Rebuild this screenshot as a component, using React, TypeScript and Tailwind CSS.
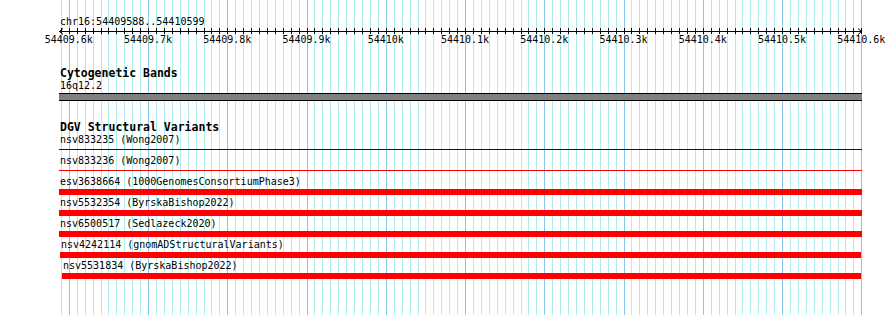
import React from 'react';

// view: chr16:54409588..54410599, 0.7925 px per bp, track area starts at x=59
const VIEW_START = 54409587;
const PX_PER_BP = 0.7925;
const LEFT = 59;
const toX = (bp: number) => LEFT + (bp - VIEW_START) * PX_PER_BP;

const gridBps: number[] = [];
for (let bp = 54409590; bp <= 54410600; bp += 10) gridBps.push(bp);

const majorBps: number[] = [];
for (let bp = 54409600; bp <= 54410600; bp += 100) majorBps.push(bp);

const formatK = (bp: number) => `${+(bp / 1000).toFixed(1)}k`;

type Variant = {
  label: string;
  kind: 'line' | 'bar';
  color: string;
  offset: string;
  width: string;
};

const variants: Variant[] = [
  { label: 'nsv833235 (Wong2007)', kind: 'line', color: 'bg-[#0000cc]', offset: 'ml-0', width: 'w-[803px]' },
  { label: 'nsv833236 (Wong2007)', kind: 'line', color: 'bg-[#ff0000]', offset: 'ml-0', width: 'w-[803px]' },
  { label: 'esv3638664 (1000GenomesConsortiumPhase3)', kind: 'bar', color: 'bg-[#ff0000]', offset: 'ml-0', width: 'w-[803px]' },
  { label: 'nsv5532354 (ByrskaBishop2022)', kind: 'bar', color: 'bg-[#ff0000]', offset: 'ml-0', width: 'w-[803px]' },
  { label: 'nsv6500517 (Sedlazeck2020)', kind: 'bar', color: 'bg-[#ff0000]', offset: 'ml-0', width: 'w-[803px]' },
  { label: 'nsv4242114 (gnomADStructuralVariants)', kind: 'bar', color: 'bg-[#ff0000]', offset: 'ml-px', width: 'w-[801px]' },
  { label: 'nsv5531834 (ByrskaBishop2022)', kind: 'bar', color: 'bg-[#ff0000]', offset: 'ml-[3px]', width: 'w-[799px]' },
];

const GridLines = () => (
  <svg className="absolute left-0 top-0" width={890} height={315}>
    {gridBps.map((bp) => {
      const x = Math.floor(toX(bp)) + 0.5;
      const major = (bp % 100) === 0;
      return (
        <line
          key={bp}
          x1={x}
          x2={x}
          y1={0}
          y2={315}
          stroke={major ? '#87c8ea' : '#afeeee'}
          strokeWidth={1}
        />
      );
    })}
  </svg>
);

const Ruler = () => (
  <div className="relative h-[18px] w-[803px]">
    <svg className="absolute left-0 top-0" width={805} height={18}>
      <line x1={0} x2={803} y1={3.5} y2={3.5} stroke="#000" strokeWidth={1} />
      <polyline points="4,0.5 0.5,3.5 4,6.5" fill="none" stroke="#000" strokeWidth={1} />
      <polyline points="799,0.5 802.5,3.5 799,6.5" fill="none" stroke="#000" strokeWidth={1} />
      {gridBps.map((bp) => {
        const x = Math.floor(toX(bp)) - LEFT + 0.5;
        return <line key={bp} x1={x} x2={x} y1={0} y2={6} stroke="#000" strokeWidth={1} />;
      })}
    </svg>
    {majorBps.map((bp) => (
      <div
        key={bp}
        className="absolute top-[6px] h-[12px] -translate-x-1/2 whitespace-nowrap text-[10px] leading-[12px]"
        style={{ left: toX(bp) - LEFT - 0.5 }}
      >
        {formatK(bp)}
      </div>
    ))}
  </div>
);

const VariantRow = ({ v }: { v: Variant }) => (
  <div className="flex h-[21px] flex-col">
    <div className={`h-[12px] whitespace-nowrap pl-px text-[10px] leading-[12px] ${v.offset}`}>{v.label}</div>
    <div className={`mt-px h-[6px] ${v.offset} ${v.width}`}>
      {v.kind === 'bar' ? (
        <div className={`h-[6px] ${v.color}`} />
      ) : (
        <div className={`mt-[2px] h-px ${v.color}`} />
      )}
    </div>
  </div>
);

export default function App() {
  return (
    <div className="relative h-[315px] w-[890px] overflow-hidden bg-white font-['DejaVu_Sans_Mono',monospace] text-black">
      <GridLines />
      <div className="relative flex flex-col pl-[59px] pt-[16px]">
        <div className="h-[12px] pl-px text-[10px] leading-[12px]">chr16:54409588..54410599</div>
        <Ruler />

        <div className="mt-[21px] h-[13px] pl-px text-[11.5px] font-bold leading-[13px]">Cytogenetic Bands</div>
        <div className="h-[12px] pl-px text-[10px] leading-[12px]">16q12.2</div>
        <div className="mt-px h-[8px] w-[803px] border-y border-black bg-[#808080]" />

        <div className="mt-[20px] h-[13px] pl-px text-[11.5px] font-bold leading-[13px]">DGV Structural Variants</div>
        {variants.map((v) => (
          <VariantRow key={v.label} v={v} />
        ))}
      </div>
    </div>
  );
}
